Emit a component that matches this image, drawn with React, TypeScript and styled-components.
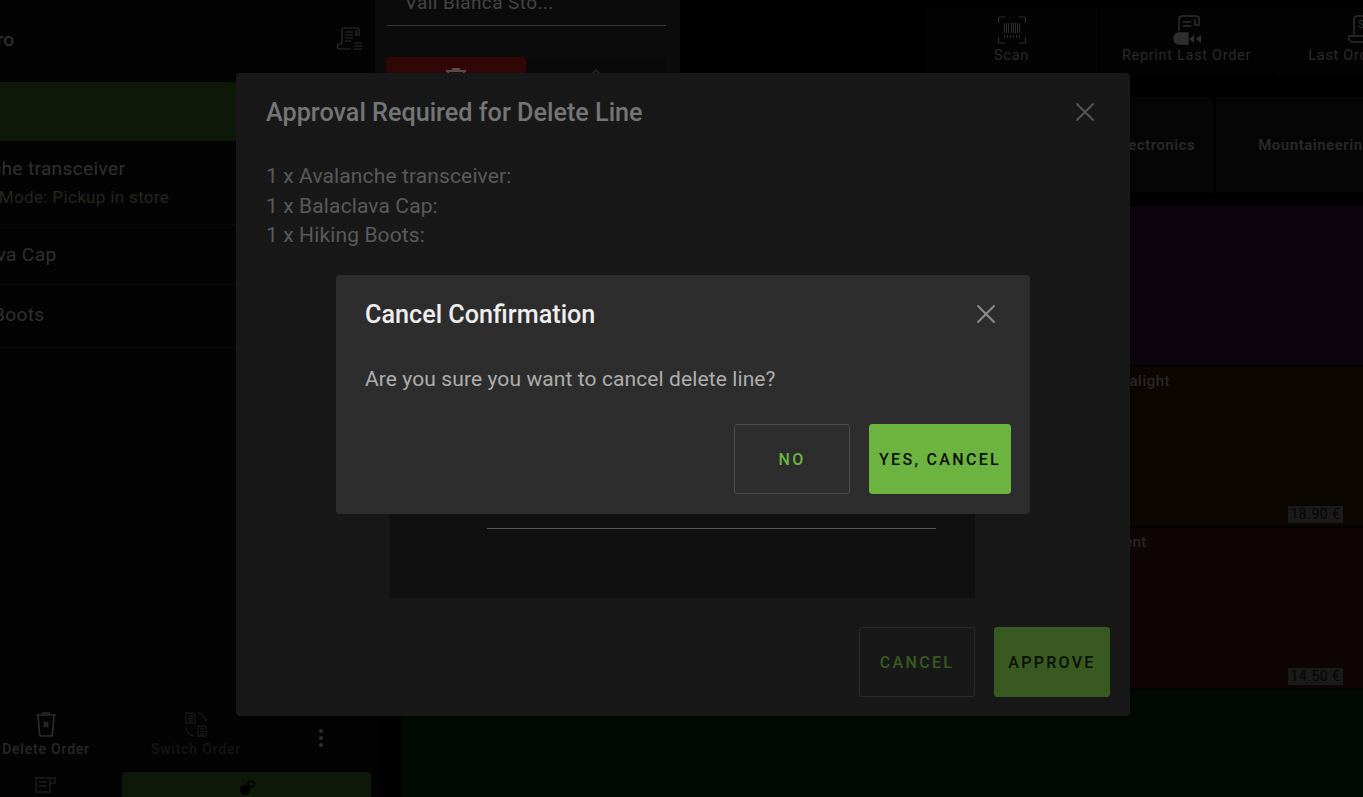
import React from 'react';
import styled, {createGlobalStyle} from 'styled-components';
import {X, EllipsisVertical} from 'lucide-react';

const GlobalStyle = createGlobalStyle`
  html, body {
    margin: 0;
    height: 100%;
    background: #000;
    font-family: Roboto, "Liberation Sans", sans-serif;
    overflow: hidden;
  }
`;

const Screen = styled.div`
  position: relative;
  width: 1363px;
  height: 797px;
  overflow: hidden;
  display: flex;
  background: #000;
`;

const OrderPanel = styled.div`
  flex: none;
  width: 508px;
  margin-left: -128px;
  height: 797px;
  padding-top: 22px;
  box-sizing: border-box;
  display: flex;
  flex-direction: column;
  background: #030303;
`;

const OrderHeader = styled.div`
  height: 60px;
  flex: none;
  display: flex;
  justify-content: space-between;
  padding: 0 16px 0 113px;
  box-sizing: border-box;
  color: #363636;
  font-size: 19px;
  line-height: 36px;
`;

const HeaderIcon = styled.svg`
  width: 28px;
  height: 28px;
  margin-top: 4px;
  color: #2e2e2e;
`;

const GreenBar = styled.div`
  height: 59px;
  flex: none;
  background: #0e1808;
`;

const OrderLine = styled.div<{$h: number; $top: number}>`
  height: ${p => p.$h}px;
  flex: none;
  box-sizing: border-box;
  border-bottom: 1px solid #090909;
  padding: ${p => p.$top}px 0 0 60px;
  white-space: nowrap;
`;

const LineTitle = styled.div`
  font-size: 19.2px;
  line-height: 22px;
  letter-spacing: 0.3px;
  color: #303030;
`;

const LineMeta = styled.div`
  margin-top: 7px;
  font-size: 17.1px;
  line-height: 20px;
  letter-spacing: 0.3px;
  color: #26261c;
`;

const OrderFooter = styled.div`
  margin-top: auto;
  display: flex;
  flex-direction: column;
`;

const ActionRow = styled.div`
  height: 62px;
  display: flex;
  align-items: flex-start;
  padding-left: 99px;
`;

const Action = styled.div<{$dim?: boolean}>`
  width: 150px;
  flex: none;
  padding-top: 1px;
  display: flex;
  flex-direction: column;
  align-items: center;
  gap: 3px;
  font-size: 14px;
  font-weight: 500;
  letter-spacing: 0.8px;
  line-height: 16px;
  white-space: nowrap;
  color: ${p => (p.$dim ? '#151515' : '#282828')};
`;

const MoreButton = styled.div`
  width: 100px;
  flex: none;
  display: flex;
  justify-content: center;
  padding-top: 16px;
  color: #2e2e2e;
`;

const PayRow = styled.div`
  height: 25px;
  display: flex;
  align-items: flex-start;
  padding-left: 99px;
`;

const PaySlot = styled.div`
  width: 150px;
  flex: none;
  display: flex;
  justify-content: center;
  padding-top: 4px;
  color: #1e1e1e;
`;

const PayButton = styled.div`
  width: 249px;
  margin-left: 1px;
  height: 40px;
  border-radius: 3px;
  background: #0e1808;
  display: flex;
  justify-content: center;
  padding-top: 8px;
  box-sizing: border-box;
`;

const StorePopup = styled.div`
  position: absolute;
  left: 375px;
  top: 0;
  width: 305px;
  height: 420px;
  box-sizing: border-box;
  padding: 0 14px 0 11px;
  background: #0b0b0b;
`;

const StoreField = styled.div`
  height: 26px;
  margin-left: 1px;
  box-sizing: border-box;
  border-bottom: 1px solid #333;
  padding-left: 18px;
  font-size: 19px;
  line-height: 6px;
  letter-spacing: 0.4px;
  color: #444;
  overflow: hidden;
`;

const TabRow = styled.div`
  margin-top: 31px;
  display: flex;
  gap: 1px;
`;

const Tab = styled.div<{$red?: boolean}>`
  flex: 1;
  height: 60px;
  border-radius: 3px 3px 0 0;
  background: ${p => (p.$red ? '#300707' : '#090909')};
  display: flex;
  justify-content: center;
  padding-top: 10px;
  box-sizing: border-box;
  color: ${p => (p.$red ? '#5a4a4a' : '#222')};
`;

const Main = styled.div`
  flex: 1;
  min-width: 0;
  margin-left: 22px;
  display: flex;
  flex-direction: column;
  overflow: hidden;
`;

const Toolbar = styled.div`
  height: 68px;
  margin-top: 8px;
  flex: none;
  display: flex;
  gap: 2px;
  padding-left: 523px;
`;

const ToolButton = styled.div`
  width: 173px;
  flex: none;
  box-sizing: border-box;
  background: #030303;
  display: flex;
  flex-direction: column;
  align-items: center;
  padding-top: 7px;
  font-size: 14.5px;
  line-height: 17px;
  letter-spacing: 0.7px;
  white-space: nowrap;
  color: #2a2a2a;
`;

const ToolIcon = styled.svg`
  width: 30px;
  height: 30px;
  flex: none;
  margin-bottom: 2px;
  color: #2e2e2e;
`;

const Categories = styled.div`
  height: 96px;
  margin-top: 21px;
  flex: none;
  display: flex;
  gap: 3px;
  padding-left: 695px;
`;

const Category = styled.div<{$w: number}>`
  width: ${p => p.$w}px;
  flex: none;
  padding-top: 40px;
  box-sizing: border-box;
  background: #050505;
  text-align: center;
  font-size: 15px;
  font-weight: 700;
  line-height: 17px;
  letter-spacing: 0.5px;
  white-space: nowrap;
  color: #272727;
`;

const Tiles = styled.div`
  margin-top: 13px;
  flex: 1;
  display: flex;
  flex-direction: column;
  gap: 2px;
`;

const Tile = styled.div<{$bg: string; $h: number}>`
  height: ${p => p.$h}px;
  flex: none;
  box-sizing: border-box;
  background: ${p => p.$bg};
  padding: 5px 20px 3px 625px;
  display: flex;
  flex-direction: column;
  justify-content: space-between;
  font-size: 15px;
  font-weight: 500;
  line-height: 18px;
  letter-spacing: 0.5px;
  white-space: nowrap;
  color: #272727;
`;

const Price = styled.div`
  align-self: flex-end;
  width: 55px;
  height: 17px;
  background: #1a1a1a;
  text-align: center;
  font-size: 14px;
  font-weight: 400;
  line-height: 17px;
  color: #050505;
`;

const ApprovalDialog = styled.div`
  position: absolute;
  left: 236px;
  top: 73px;
  width: 894px;
  height: 643px;
  box-sizing: border-box;
  padding: 0 20px 19px 30px;
  border-radius: 4px;
  background: #181818;
  display: flex;
  flex-direction: column;
`;

const DialogHeader = styled.div`
  height: 78px;
  flex: none;
  display: flex;
  align-items: center;
  justify-content: space-between;
`;

const DialogTitle = styled.h2<{$color: string}>`
  margin: 2px 0 0;
  font-size: 25.2px;
  font-weight: 500;
  line-height: 32px;
  color: ${p => p.$color};
`;

const CloseIcon = styled(X)<{$color: string}>`
  width: 32px;
  height: 32px;
  margin-right: 9px;
  color: ${p => p.$color};
  stroke-width: 1.4;
`;

const ApprovalItems = styled.div`
  margin-top: 11px;
  font-size: 21px;
  line-height: 29.5px;
  letter-spacing: 0.12px;
  color: #5a5a5a;
`;

const ReasonBox = styled.div`
  margin: auto 135px 0 124px;
  height: 207px;
  width: 585px;
  box-sizing: border-box;
  background: #101010;
  padding: 0 39px 69px 97px;
  display: flex;
  align-items: flex-end;
`;

const ReasonLine = styled.div`
  width: 100%;
  height: 1px;
  background: #555;
`;

const DialogActions = styled.div`
  margin-top: 29px;
  display: flex;
  justify-content: flex-end;
  gap: 19px;
`;

const Button = styled.button<{$fill?: string; $text: string; $border: string; $w: number}>`
  width: ${p => p.$w}px;
  height: 70px;
  padding: 0;
  box-sizing: border-box;
  border: 1px solid ${p => p.$border};
  border-radius: 3px;
  background: ${p => p.$fill ?? 'transparent'};
  color: ${p => p.$text};
  font-family: inherit;
  font-size: 16px;
  font-weight: 500;
  letter-spacing: 2.3px;
`;

const ConfirmDialog = styled.div`
  position: absolute;
  left: 336px;
  top: 275px;
  width: 694px;
  height: 239px;
  box-sizing: border-box;
  padding: 0 19px 20px 29px;
  border-radius: 4px;
  background: #2d2d2d;
  display: flex;
  flex-direction: column;
`;

const ConfirmText = styled.p`
  margin: 12px 0 0;
  font-size: 21px;
  line-height: 28px;
  letter-spacing: 0.1px;
  color: #aeaeae;
`;

const ConfirmActions = styled.div`
  margin-top: auto;
  display: flex;
  justify-content: flex-end;
  gap: 19px;
`;

const tiles = [
  {bg: '#0e0410', h: 159, label: '', price: ''},
  {bg: '#0c0600', h: 159, label: 'Headlamp Ultralight', price: '18.90 €'},
  {bg: '#100506', h: 160, label: 'Lightweight Tent', price: '14.50 €'},
  {bg: '#000a03', h: 108, label: '', price: ''},
];

const App = () => (
  <Screen>
    <GlobalStyle />
    <OrderPanel>
      <OrderHeader>
        <span>Pro</span>
        <HeaderIcon viewBox="0 0 28 28" fill="none" stroke="currentColor" strokeWidth="1.2">
          <path d="M6 18V4a2 2 0 0 1 2-2h13a2 2 0 0 1 2 2v5h-3V4M9 6h8M9 9h8M9 12h8M9 15h6M6 18H3a1.5 1.5 0 0 0-1.5 1.5V21A2 2 0 0 0 3.500 23H15M18 17h8M18 20h8M18 23h8" />
        </HeaderIcon>
      </OrderHeader>
      <GreenBar />
      <OrderLine $h={84} $top={17}>
        <LineTitle>Avalanche transceiver</LineTitle>
        <LineMeta>Delivery Mode: Pickup in store</LineMeta>
      </OrderLine>
      <OrderLine $h={60} $top={19}>
        <LineTitle>Balaclava Cap</LineTitle>
      </OrderLine>
      <OrderLine $h={63} $top={19}>
        <LineTitle>Hiking Boots</LineTitle>
      </OrderLine>
      <OrderFooter>
        <ActionRow>
          <Action>
            <svg width="26" height="27" viewBox="0 0 26 27" fill="none" stroke="#2b2b2b" strokeWidth="1.7" strokeLinejoin="round">
              <path d="M3 4h20M9 4l1-2h6l1 2M5 4l1.500 19a2 2 0 0 0 2 2h9a2 2 0 0 0 2-2L21 4" />
              <path d="M10.500 11l5 5M15.500 11l-5 5" strokeWidth="2" />
            </svg>
            Delete Order
          </Action>
          <Action $dim>
            <svg width="26" height="27" viewBox="0 0 26 27" fill="none" stroke="#181818" strokeWidth="1.3">
              <path d="M3 2h7l2 2v8H3zM5 5h5M5 7.500h5M5 10h5M15 15h7l1 2v8h-8zM17 18h4M17 20.500h4M17 23h4" />
              <path d="M15 2a9 9 0 0 1 8 9M11 25a9 9 0 0 1-8-9" />
            </svg>
            Switch Order
          </Action>
          <MoreButton>
            <EllipsisVertical size={24} />
          </MoreButton>
        </ActionRow>
        <PayRow>
          <PaySlot>
            <svg width="22" height="22" viewBox="0 0 22 22" fill="none" stroke="currentColor" strokeWidth="1.4">
              <path d="M1 2h14v14H1zM4 6h8M4 10h8M15 2h5v5h-5" />
            </svg>
          </PaySlot>
          <PayButton>
            <svg width="16" height="16" viewBox="0 0 16 16">
              <circle cx="6" cy="10" r="5" fill="#000" />
              <circle cx="12" cy="4" r="3" fill="none" stroke="#000" strokeWidth="1.6" />
            </svg>
          </PayButton>
        </PayRow>
      </OrderFooter>
    </OrderPanel>
    <StorePopup>
      <StoreField>Vail Bianca Sto...</StoreField>
      <TabRow>
        <Tab $red>
          <svg width="26" height="26" viewBox="0 0 26 26" fill="none" stroke="currentColor" strokeWidth="1.8">
            <path d="M3 4h20M9 4l1-2h6l1 2M5 4l1.500 19h13L21 4" />
          </svg>
        </Tab>
        <Tab>
          <svg width="26" height="26" viewBox="0 0 24 24" fill="none" stroke="currentColor" strokeWidth="1.8">
            <path d="M3 11l9-8 9 8v10H3z" />
          </svg>
        </Tab>
      </TabRow>
    </StorePopup>
    <Main>
      <Toolbar>
        <ToolButton>
          <ToolIcon viewBox="0 0 30 30" fill="none" stroke="currentColor" strokeWidth="1.100">
            <path d="M8 2H2.500a1 1 0 0 0-1 1v5M22 2h5.500a1 1 0 0 1 1 1v5M28.500 22v5a1 1 0 0 1-1 1H22M8 28H2.500a1 1 0 0 1-1-1v-5" />
            <path d="M7.500 8v10M9.500 8v10M11.500 8v10M14.500 8v10M16.500 8v10M18.500 8v10M20.500 8v10M22.500 8v10M7.500 20v3M10.500 20v3M13.500 20v3M16.500 20v3M19.500 20v3M22.500 20v3" strokeWidth="1" />
          </ToolIcon>
          Scan
        </ToolButton>
        <ToolButton>
          <ToolIcon viewBox="0 0 30 30" fill="none" stroke="currentColor" strokeWidth="1.5">
            <path d="M7 16V4a3 3 0 0 1 3-3h14a3 3 0 0 1 3 3v6h-4V4M11 7h8M11 11h8" />
            <path d="M2 23a5 5 0 0 1 5-5h9v11H7a5 5 0 0 1-5-6z" fill="currentColor" />
            <path d="M22 20l-5 4 5 4zM29 20l-5 4 5 4z" fill="currentColor" stroke="none" />
          </ToolIcon>
          Reprint Last Order
        </ToolButton>
        <ToolButton>
          <ToolIcon viewBox="0 0 30 30" fill="none" stroke="currentColor" strokeWidth="1.5">
            <path d="M7 21V4a3 3 0 0 1 3-3h16a3 3 0 0 1 3 3v16M2 21h20v2a4 4 0 0 1-4 4H6a4 4 0 0 1-4-4z" />
            <text x="11" y="13" fontSize="11" fill="currentColor" stroke="none">$</text>
          </ToolIcon>
          Last Order Info
        </ToolButton>
      </Toolbar>
      <Categories>
        <Category $w={116}>Electronics</Category>
        <Category $w={198}>Mountaineering</Category>
      </Categories>
      <Tiles>
        {tiles.map(({bg, h, label, price}, key) => (
          <Tile key={key} $bg={bg} $h={h}>
            <span>{label}</span>
            {price && <Price>{price}</Price>}
          </Tile>
        ))}
      </Tiles>
    </Main>
    <ApprovalDialog>
      <DialogHeader>
        <DialogTitle $color="#757575">Approval Required for Delete Line</DialogTitle>
        <CloseIcon $color="#555555" />
      </DialogHeader>
      <ApprovalItems>
        <div>1 x Avalanche transceiver:</div>
        <div>1 x Balaclava Cap:</div>
        <div>1 x Hiking Boots:</div>
      </ApprovalItems>
      <ReasonBox>
        <ReasonLine />
      </ReasonBox>
      <DialogActions>
        <Button $w={116} $text="#385a20" $border="#2a2a2a">CANCEL</Button>
        <Button $w={116} $fill="#385a20" $text="#0a0f06" $border="#385a20">APPROVE</Button>
      </DialogActions>
    </ApprovalDialog>
    <ConfirmDialog>
      <DialogHeader>
        <DialogTitle $color="#eeeeee">Cancel Confirmation</DialogTitle>
        <CloseIcon $color="#8c8c8c" />
      </DialogHeader>
      <ConfirmText>Are you sure you want to cancel delete line?</ConfirmText>
      <ConfirmActions>
        <Button $w={116} $text="#6cb33f" $border="#4d4d4d">NO</Button>
        <Button $w={142} $fill="#6cb33f" $text="#0a0f06" $border="#6cb33f">YES, CANCEL</Button>
      </ConfirmActions>
    </ConfirmDialog>
  </Screen>
);

export default App;
